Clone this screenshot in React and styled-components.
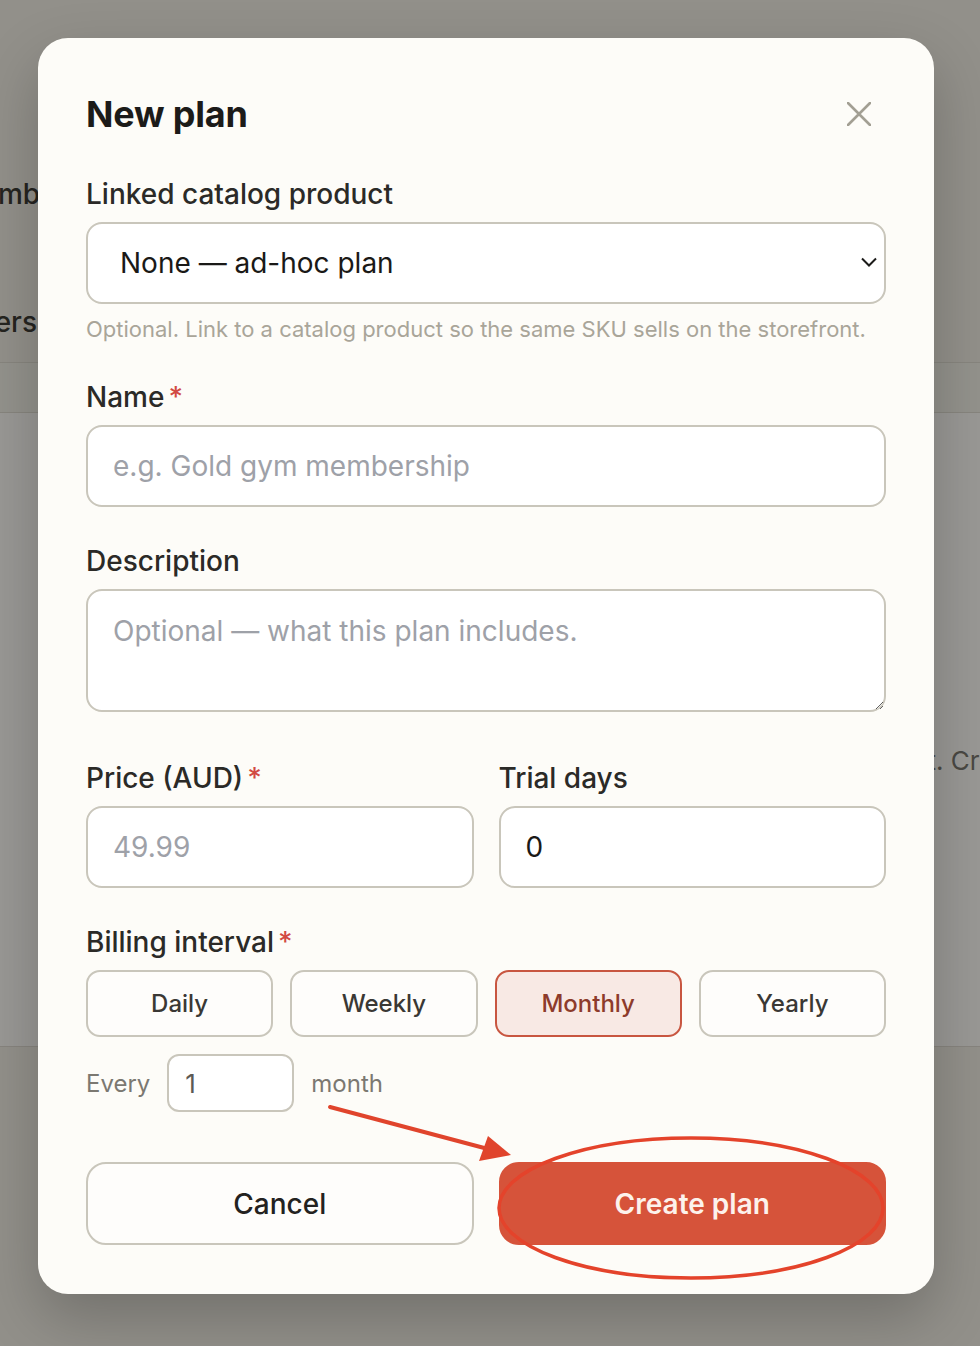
import React, { useState } from "react";
import styled, { createGlobalStyle } from "styled-components";

const GlobalStyle = createGlobalStyle`
  * { box-sizing: border-box; }
  html, body { margin: 0; padding: 0; }
  body {
    font-family: Inter, "Noto Sans", "Liberation Sans", sans-serif;
    background: #f1ede6;
  }
`;

// page behind the dialog
const Page = styled.div`
  position: relative;
  width: 980px;
  height: 1346px;
  overflow: hidden;
  background: #f1ede6;
  color: #2b2925;
`;

const PageTitle = styled.div`
  padding-top: 178px;
  font-size: 28px;
  font-weight: 500;
  line-height: 32px;
  white-space: nowrap;
  span {
    display: inline-block;
    margin-left: -44px;
  }
`;

const TabRow = styled.div`
  display: flex;
  justify-content: flex-end;
  width: 37px;
  margin-top: 96px;
  font-size: 28px;
  font-weight: 500;
  line-height: 32px;
  white-space: nowrap;
`;

const TableHead = styled.div`
  margin-top: 24px;
  height: 51px;
  border-top: 1px solid #ddd9d0;
  border-bottom: 1px solid #ddd9d0;
  background: #f3f0ea;
`;

const TableBody = styled.div`
  height: 634px;
  background: #fdfcf9;
  border-bottom: 1px solid #dcd8cf;
  padding-top: 332px;
`;

const EmptyText = styled.p`
  display: flex;
  margin: 0;
  white-space: nowrap;
  font-size: 26px;
  line-height: 32px;
  color: #6e6b65;
`;

const EmptyLead = styled.span`
  display: flex;
  justify-content: flex-end;
  flex: 0 0 936px;
`;

const Backdrop = styled.div`
  position: absolute;
  inset: 0;
  background: rgba(32, 30, 27, 0.45);
  padding: 38px 46px 0 38px;
`;

const Modal = styled.div`
  width: 896px;
  height: 1256px;
  background: #fdfcf8;
  border-radius: 30px;
  padding: 54px 48px 48px 48px;
  box-shadow: 0 24px 60px rgba(0, 0, 0, 0.22);
  display: flex;
  flex-direction: column;
`;

const ModalHeader = styled.div`
  display: flex;
  justify-content: space-between;
  align-items: center;
  height: 44px;
`;

const Title = styled.h2`
  margin: 0;
  font-size: 36px;
  line-height: 44px;
  font-weight: 700;
  color: #1c1b19;
  letter-spacing: -0.2px;
`;

const CloseButton = styled.button`
  border: none;
  background: none;
  padding: 0;
  margin-right: 15px;
  width: 24px;
  height: 24px;
  display: flex;
  cursor: pointer;
`;

const Field = styled.div`
  display: flex;
  flex-direction: column;
  margin-top: ${(p) => p.$top || 38}px;
  min-width: 0;
`;

const Label = styled.label`
  font-size: 28px;
  line-height: 32px;
  font-weight: 500;
  color: #2b2a27;
  margin-bottom: 12px;
`;

const Req = styled.span`
  color: #d24a43;
  margin-left: 4px;
`;

const SelectWrap = styled.div`
  position: relative;
`;

const Select = styled.select`
  appearance: none;
  width: 100%;
  height: 82px;
  border: 2px solid #c9c6bb;
  border-radius: 16px;
  background: #ffffff;
  padding: 0 48px 0 32px;
  font-family: inherit;
  font-size: 28px;
  color: #1a1917;
  outline: none;
`;

const Chevron = styled.svg`
  position: absolute;
  right: 8px;
  top: 34px;
  pointer-events: none;
`;

const Help = styled.p`
  margin: 11px 0 0 0;
  font-size: 22px;
  line-height: 28px;
  color: #a9a599;
`;

const Input = styled.input`
  width: 100%;
  height: ${(p) => p.$h || 82}px;
  border: 2px solid #c9c6bb;
  border-radius: ${(p) => p.$r || 16}px;
  background: #ffffff;
  padding: 0 ${(p) => p.$pad || 25}px;
  font-family: inherit;
  font-size: ${(p) => p.$fs || 28}px;
  color: ${(p) => p.$color || "#1a1917"};
  outline: none;
  &::placeholder {
    color: #9ea1a8;
  }
`;

const TextArea = styled.textarea`
  display: block;
  width: 100%;
  height: 123px;
  border: 2px solid #c9c6bb;
  border-radius: 16px;
  background: #ffffff;
  padding: 19px 25px;
  font-family: inherit;
  font-size: 28px;
  line-height: 42px;
  color: #1a1917;
  outline: none;
  &::placeholder {
    color: #9ea1a8;
  }
`;

const TwoCol = styled.div`
  display: grid;
  grid-template-columns: 1fr 1fr;
  column-gap: 25px;
  margin-top: 50px;
  > div {
    margin-top: 0;
  }
`;

const Segments = styled.div`
  display: grid;
  grid-template-columns: repeat(4, 1fr);
  gap: 17px;
`;

const Segment = styled.button`
  height: 67px;
  border-radius: 14px;
  border: 2px solid ${(p) => (p.$active ? "#c85640" : "#c9c6bb")};
  background: ${(p) => (p.$active ? "#f8e9e4" : "#fefdfb")};
  color: ${(p) => (p.$active ? "#8d3b2b" : "#3a3834")};
  font-family: inherit;
  font-size: 24px;
  font-weight: 500;
  cursor: pointer;
`;

const EveryRow = styled.div`
  display: flex;
  align-items: center;
  gap: 17px;
  margin-top: 17px;
  font-size: 24px;
  color: #7b7871;
`;

const EveryInput = styled(Input)`
  width: 127px;
`;

const Footer = styled.div`
  display: grid;
  grid-template-columns: 1fr 1fr;
  gap: 25px;
  margin-top: 50px;
`;

const FooterButton = styled.button`
  height: 83px;
  border-radius: 20px;
  font-family: inherit;
  font-size: 28px;
  font-weight: ${(p) => (p.$primary ? 600 : 500)};
  border: 2px solid ${(p) => (p.$primary ? "#d6533a" : "#c9c6bb")};
  background: ${(p) => (p.$primary ? "#d6533a" : "#fefdfb")};
  color: ${(p) => (p.$primary ? "#fdf2ec" : "#232220")};
  cursor: pointer;
`;

const Annotation = styled.svg`
  position: absolute;
  left: 0;
  top: 0;
  pointer-events: none;
`;

const intervals = ["Daily", "Weekly", "Monthly", "Yearly"];

export default function App() {
  const [interval, setInterval] = useState("Monthly");

  return (
    <>
      <GlobalStyle />
      <Page>
        <PageTitle>
          <span>Memberships</span>
        </PageTitle>
        <TabRow>Subscribers</TabRow>
        <TableHead />
        <TableBody>
          <EmptyText>
            <EmptyLead>No subscription plans yet</EmptyLead>. Create your first
            plan.
          </EmptyText>
        </TableBody>

        <Backdrop>
          <Modal>
            <ModalHeader>
              <Title>New plan</Title>
              <CloseButton aria-label="Close">
                <svg width="24" height="24" viewBox="0 0 24 24">
                  <path
                    d="M1 1L23 23M23 1L1 23"
                    stroke="#a29f93"
                    strokeWidth="2.6"
                    strokeLinecap="round"
                  />
                </svg>
              </CloseButton>
            </ModalHeader>

            <Field $top={42}>
              <Label>Linked catalog product</Label>
              <SelectWrap>
                <Select defaultValue="none">
                  <option value="none">None — ad-hoc plan</option>
                </Select>
                <Chevron width="18" height="12" viewBox="0 0 18 12">
                  <path
                    d="M2 2.5L9 9.5L16 2.5"
                    fill="none"
                    stroke="#1c1b19"
                    strokeWidth="2"
                  />
                </Chevron>
              </SelectWrap>
              <Help>
                Optional. Link to a catalog product so the same SKU sells on the
                storefront.
              </Help>
            </Field>

            <Field>
              <Label>
                Name<Req>*</Req>
              </Label>
              <Input placeholder="e.g. Gold gym membership" />
            </Field>

            <Field>
              <Label>Description</Label>
              <TextArea placeholder="Optional — what this plan includes." />
            </Field>

            <TwoCol>
              <Field>
                <Label>
                  Price (AUD)<Req>*</Req>
                </Label>
                <Input placeholder="49.99" />
              </Field>
              <Field>
                <Label>Trial days</Label>
                <Input defaultValue="0" />
              </Field>
            </TwoCol>

            <Field>
              <Label>
                Billing interval<Req>*</Req>
              </Label>
              <Segments>
                {intervals.map((name) => (
                  <Segment
                    key={name}
                    $active={interval === name}
                    onClick={() => setInterval(name)}
                  >
                    {name}
                  </Segment>
                ))}
              </Segments>
              <EveryRow>
                <span>Every</span>
                <EveryInput
                  $h={58}
                  $r={12}
                  $pad={16}
                  $fs={26}
                  $color="#5c5a55"
                  defaultValue="1"
                />
                <span>month</span>
              </EveryRow>
            </Field>

            <Footer>
              <FooterButton>Cancel</FooterButton>
              <FooterButton $primary>Create plan</FooterButton>
            </Footer>
          </Modal>
        </Backdrop>

        <Annotation width="980" height="1346" viewBox="0 0 980 1346">
          <line
            x1="330"
            y1="1107"
            x2="488"
            y2="1149"
            stroke="#e0442c"
            strokeWidth="4"
            strokeLinecap="round"
          />
          <polygon points="511,1155 479,1161 488,1136" fill="#e0442c" />
          <ellipse
            cx="691"
            cy="1208"
            rx="192"
            ry="70"
            fill="none"
            stroke="#e4432b"
            strokeWidth="3.5"
          />
        </Annotation>
      </Page>
    </>
  );
}
